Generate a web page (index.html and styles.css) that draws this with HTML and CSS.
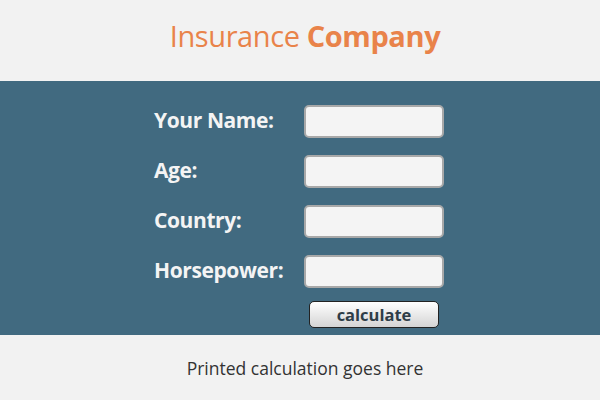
FILE: index.html
```html
<!DOCTYPE html>
<html>
<head>
<meta charset="utf-8">
<link rel="stylesheet" href="styles.css">
</head>
<body>
<header class="top">
  <h1 class="title">Insurance <strong>Company</strong></h1>
</header>
<main class="band">
  <form class="form">
    <label class="label">Your Name:</label>
    <input class="field" type="text">
    <label class="label">Age:</label>
    <input class="field" type="text">
    <label class="label">Country:</label>
    <input class="field" type="text">
    <label class="label">Horsepower:</label>
    <input class="field" type="text">
    <span></span>
    <button class="btn" type="button">calculate</button>
  </form>
</main>
<footer class="bottom">
  <p class="result">Printed calculation goes here</p>
</footer>
</body>
</html>
```
FILE: styles.css
```css
html, body {
  margin: 0;
  padding: 0;
  background: #f2f2f2;
  font-family: "Open Sans", "Noto Sans", sans-serif;
}
.top {
  height: 81px;
  box-sizing: border-box;
  padding-bottom: 10px;
  display: flex;
  align-items: center;
  justify-content: center;
}
.title {
  margin: 0 0 0 10px;
  font-size: 29px;
  font-weight: 400;
  color: #e9834a;
  letter-spacing: -0.4px;
}
.title strong {
  font-weight: 700;
}
.band {
  background: #416a80;
  height: 254px;
  box-sizing: border-box;
  padding-top: 24px;
  display: flex;
  justify-content: center;
}
.form {
  display: grid;
  grid-template-columns: 150px 140px;
  grid-auto-rows: 33px;
  row-gap: 17px;
  align-items: center;
  margin-right: 2px;
}
.label {
  color: #f4f4f4;
  font-weight: 700;
  font-size: 21px;
  letter-spacing: -0.4px;
  margin-top: -3px;
}
.field {
  width: 140px;
  height: 33px;
  box-sizing: border-box;
  border: 2px solid #a8a8a8;
  border-radius: 5px;
  background: #f4f4f4;
  margin: 0;
}
.btn {
  justify-self: center;
  align-self: start;
  margin-top: -4px;
  width: 130px;
  height: 27px;
  border: 1px solid #222;
  border-radius: 5px;
  background: linear-gradient(#ffffff, #d4d4d4);
  color: #2e3d48;
  font-family: "Open Sans", "Noto Sans", sans-serif;
  font-weight: 700;
  font-size: 16.5px;
  padding: 0;
  line-height: 25px;
}
.bottom {
  height: 65px;
  display: flex;
  align-items: center;
  justify-content: center;
}
.result {
  margin: 0 0 0 10px;
  font-size: 17.5px;
  color: #333;
}
```
